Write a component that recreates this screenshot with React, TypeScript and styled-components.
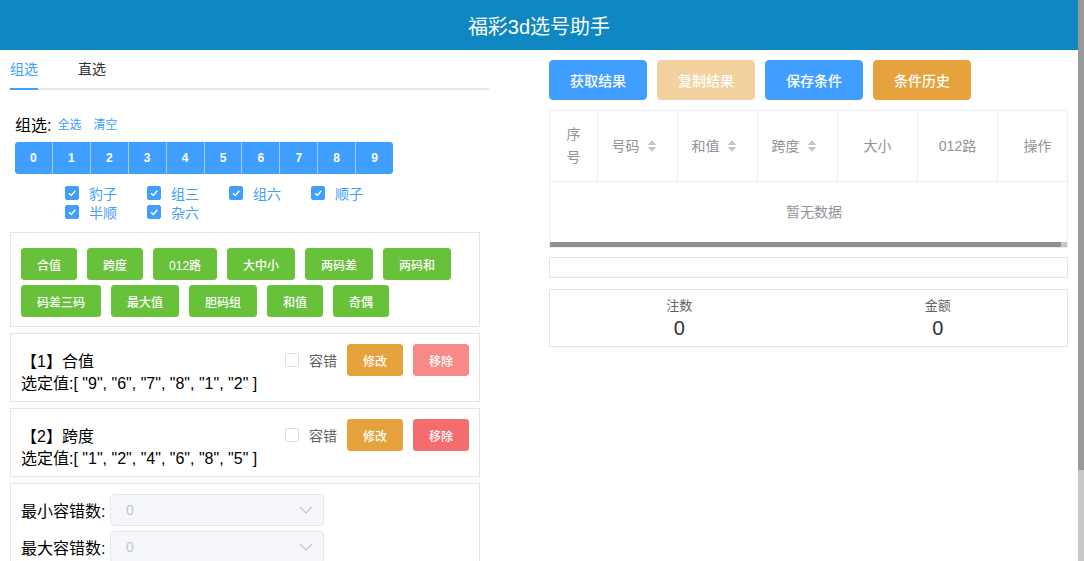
import styled, { createGlobalStyle } from 'styled-components';

const GlobalStyle = createGlobalStyle`
  * { box-sizing: border-box; }
  html, body { margin: 0; padding: 0; background: #fff; }
  body {
    font-family: "Liberation Sans", "Noto Sans CJK SC", sans-serif;
    color: #000;
  }
`

// the window: page content plus its vertical scrollbar
const Viewport = styled.div`
    height: 100vh;
    display: flex;
    overflow: hidden;
`

const Page = styled.div`
    flex: 1;
    min-width: 0;
    min-height: 669px;
`

const VTrack = styled.div`
    width: 6px;
    flex-shrink: 0;
    background: #c8c8c8;
`

const VThumb = styled.div`
    height: 470px;
    background: #999;
`

const Header = styled.header`
    height: 50px;
    background: #0f87c2;
    color: #fff;
    font-size: 20px;
    display: flex;
    align-items: center;
    justify-content: center;
`

const Main = styled.div`
    display: flex;
    gap: 60px;
    padding: 0 10px;
`

const LeftLayout = styled.div`
    width: 480px;
    display: flex;
    flex-direction: column;
`

const TabNav = styled.div`
    height: 40px;
    display: flex;
    gap: 40px;
    border-bottom: 2px solid #e4e7ed;
    margin-bottom: 15px;
`

const TabItem = styled.div<{ $active?: boolean }>`
    height: 40px;
    line-height: 38px;
    font-size: 14px;
    color: ${p => p.$active ? '#409eff' : '#303133'};
    border-bottom: 2px solid ${p => p.$active ? '#409eff' : 'transparent'};
`

const GroupPane = styled.div`
    padding-left: 5px;
`

const SelectRow = styled.div`
    height: 37px;
    display: flex;
    align-items: center;
    font-size: 16px;
`

const TextLink = styled.span`
    font-size: 12px;
    color: #409eff;
    margin-left: 6px;
    & + & { margin-left: 12px; }
`

const NumGroup = styled.div`
    width: 378px;
    height: 32px;
    display: flex;
    border-radius: 4px;
    overflow: hidden;
    background: #409eff;
`

const NumButton = styled.button`
    flex: 1;
    border: none;
    background: #409eff;
    color: #fff;
    font-family: inherit;
    font-size: 12px;
    font-weight: 700;
    padding: 0;
    & + & { border-left: 1px solid rgba(255, 255, 255, .5); }
`

const CheckGrid = styled.div`
    display: grid;
    grid-template-columns: repeat(4, 82px);
    margin: 9px 0 0 50px;
`

const CheckItem = styled.label<{ $checked?: boolean }>`
    height: 19px;
    display: flex;
    align-items: center;
    gap: 10px;
    font-size: 14px;
    color: ${p => p.$checked ? '#409eff' : '#606266'};
`

const CheckBox = styled.span<{ $checked?: boolean }>`
    width: 14px;
    height: 14px;
    border-radius: 2px;
    border: 1px solid ${p => p.$checked ? '#409eff' : '#dcdfe6'};
    background: ${p => p.$checked ? '#409eff' : '#fff'};
    display: flex;
    align-items: center;
    justify-content: center;
`

const Panel = styled.div`
    width: 470px;
    border: 1px solid #e4e4e4;
    margin-top: 6px;
`

const CondPanel = styled(Panel)`
    margin-top: 11px;
    padding: 15px 10px 9px;
    display: flex;
    flex-wrap: wrap;
    gap: 5px 10px;
`

const SmallButton = styled.button<{ $bg: string }>`
    height: 32px;
    padding: 0 15px;
    border: 1px solid ${p => p.$bg};
    background: ${p => p.$bg};
    color: #fff;
    border-radius: 3px;
    font-family: inherit;
    font-size: 12px;
    font-weight: 500;
`

const RuleCard = styled(Panel)`
    padding: 10px 10px 9px;
`

const RuleHead = styled.div`
    height: 32px;
    display: flex;
    align-items: center;
    justify-content: space-between;
`

const RuleTitle = styled.div`
    font-size: 16px;
`

const RuleTools = styled.div`
    display: flex;
    align-items: center;
    gap: 10px;
`

const ToolLabel = styled.span`
    font-size: 14px;
    color: #606266;
`

const RuleValue = styled.div`
    font-size: 16px;
    line-height: 16px;
`

const TolerancePanel = styled(Panel)`
    padding: 10px;
    display: flex;
    flex-direction: column;
    gap: 5px;
`

const FormRow = styled.div`
    display: flex;
    align-items: center;
`

const FormLabel = styled.span`
    font-size: 16px;
    width: 89px;
`

const SelectBox = styled.div`
    width: 214px;
    height: 32px;
    border: 1px solid #e4e7ed;
    border-radius: 4px;
    background: #f5f7fa;
    color: #c0c4cc;
    font-size: 14px;
    padding: 0 10px 0 15px;
    display: flex;
    align-items: center;
    justify-content: space-between;
`

const RightLayout = styled.div`
    width: 519px;
    display: flex;
    flex-direction: column;
`

const ActionRow = styled.div`
    margin-top: 10px;
    display: flex;
    gap: 10px;
`

const ActionButton = styled.button<{ $bg: string }>`
    height: 40px;
    width: 98px;
    border: 1px solid ${p => p.$bg};
    background: ${p => p.$bg};
    color: #fff;
    border-radius: 4px;
    font-family: inherit;
    font-size: 14px;
    font-weight: 500;
`

const TableWrap = styled.div`
    margin-top: 10px;
    border: 1px solid #ebeef5;
    overflow: hidden;
`

const TableGrid = styled.div`
    width: 528px;
    display: grid;
    grid-template-columns: 48px repeat(6, 80px);
`

const HeadCell = styled.div`
    padding: 12px 10px;
    line-height: 23px;
    font-size: 14px;
    color: #909399;
    border-right: 1px solid #ebeef5;
    border-bottom: 1px solid #ebeef5;
    display: flex;
    align-items: center;
    justify-content: center;
    text-align: center;
`

const CaretWrap = styled.span`
    width: 24px;
    padding-left: 7px;
    display: flex;
    align-items: center;
`

const EmptyRow = styled.div`
    grid-column: 1 / -1;
    height: 60px;
    line-height: 60px;
    text-align: center;
    font-size: 14px;
    color: #909399;
`

const HTrack = styled.div`
    height: 5px;
    background: #c8c8c8;
`

const HThumb = styled.div`
    height: 5px;
    background: #919191;
`

const BlankBox = styled.div`
    margin-top: 9px;
    height: 21px;
    border: 1px solid #e4e4e4;
`

const StatsBox = styled.div`
    margin-top: 11px;
    border: 1px solid #e4e4e4;
    padding: 8px 0;
    display: grid;
    grid-template-columns: 1fr 1fr;
`

const StatItem = styled.div`
    text-align: center;
`

const StatLabel = styled.div`
    font-size: 13px;
    line-height: 16px;
    color: #606266;
`

const StatValue = styled.div`
    margin-top: 4px;
    font-size: 20px;
    line-height: 20px;
    color: #303133;
`

const Check = () => (
    <svg width="10" height="10" viewBox="0 0 10 10">
        <polyline points="2,5.2 4.3,7.4 8.3,2.8" fill="none" stroke="#fff" strokeWidth="1.4" />
    </svg>
)

const SortCaret = () => (
    <svg width="10" height="12" viewBox="0 0 10 12">
        <path d="M5 0.5 L9.5 5 H0.5Z" fill="#c0c4cc" />
        <path d="M5 11.5 L9.5 7 H0.5Z" fill="#c0c4cc" />
    </svg>
)

const Chevron = () => (
    <svg width="14" height="8" viewBox="0 0 14 8">
        <polyline points="1,1 7,7 13,1" fill="none" stroke="#c0c4cc" strokeWidth="1.2" />
    </svg>
)

const types = ['豹子', '组三', '组六', '顺子', '半顺', '杂六'];
const conditions = ['合值', '跨度', '012路', '大中小', '两码差', '两码和', '码差三码', '最大值', '胆码组', '和值', '奇偶'];
const rules = [
    { name: '合值', values: ['9', '6', '7', '8', '1', '2'], removeColor: '#f78989' },
    { name: '跨度', values: ['1', '2', '4', '6', '8', '5'], removeColor: '#f56c6c' },
];
const columns = [
    { title: '序号', sort: false },
    { title: '号码', sort: true },
    { title: '和值', sort: true },
    { title: '跨度', sort: true },
    { title: '大小', sort: false },
    { title: '012路', sort: false },
    { title: '操作', sort: false },
];

// visible part of the table body vs its full width
const tableScroll = 510 / 516;

const App = () => {
    return (
        <Viewport>
            <GlobalStyle />
            <Page>
                <Header>福彩3d选号助手</Header>
                <Main>
                    <LeftLayout>
                        <TabNav>
                            <TabItem $active>组选</TabItem>
                            <TabItem>直选</TabItem>
                        </TabNav>
                        <GroupPane>
                            <SelectRow>
                                组选:
                                <TextLink>全选</TextLink>
                                <TextLink>清空</TextLink>
                            </SelectRow>
                            <NumGroup>
                                {Array.from({ length: 10 }, (_, i) => <NumButton key={i}>{i}</NumButton>)}
                            </NumGroup>
                            <CheckGrid>
                                {types.map(t => (
                                    <CheckItem key={t} $checked>
                                        <CheckBox $checked><Check /></CheckBox>
                                        {t}
                                    </CheckItem>
                                ))}
                            </CheckGrid>
                        </GroupPane>
                        <CondPanel>
                            {conditions.map(c => <SmallButton key={c} $bg="#67c23a">{c}</SmallButton>)}
                        </CondPanel>
                        {rules.map((r, index) => (
                            <RuleCard key={r.name}>
                                <RuleHead>
                                    <RuleTitle>【{index + 1}】{r.name}</RuleTitle>
                                    <RuleTools>
                                        <CheckBox />
                                        <ToolLabel>容错</ToolLabel>
                                        <SmallButton $bg="#e6a23c">修改</SmallButton>
                                        <SmallButton $bg={r.removeColor}>移除</SmallButton>
                                    </RuleTools>
                                </RuleHead>
                                <RuleValue>选定值:[ {r.values.map(v => `"${v}"`).join(', ')} ]</RuleValue>
                            </RuleCard>
                        ))}
                        <TolerancePanel>
                            <FormRow>
                                <FormLabel>最小容错数:</FormLabel>
                                <SelectBox>0<Chevron /></SelectBox>
                            </FormRow>
                            <FormRow>
                                <FormLabel>最大容错数:</FormLabel>
                                <SelectBox>0<Chevron /></SelectBox>
                            </FormRow>
                        </TolerancePanel>
                    </LeftLayout>
                    <RightLayout>
                        <ActionRow>
                            <ActionButton $bg="#409eff">获取结果</ActionButton>
                            <ActionButton $bg="#f3d19e">复制结果</ActionButton>
                            <ActionButton $bg="#409eff">保存条件</ActionButton>
                            <ActionButton $bg="#e6a23c">条件历史</ActionButton>
                        </ActionRow>
                        <TableWrap>
                            <TableGrid>
                                {columns.map(c => (
                                    <HeadCell key={c.title}>
                                        <span>{c.title}</span>
                                        {c.sort ? <CaretWrap><SortCaret /></CaretWrap> : <></>}
                                    </HeadCell>
                                ))}
                                <EmptyRow>暂无数据</EmptyRow>
                            </TableGrid>
                            <HTrack>
                                <HThumb style={{ width: `${tableScroll * 100}%` }} />
                            </HTrack>
                        </TableWrap>
                        <BlankBox />
                        <StatsBox>
                            <StatItem>
                                <StatLabel>注数</StatLabel>
                                <StatValue>0</StatValue>
                            </StatItem>
                            <StatItem>
                                <StatLabel>金额</StatLabel>
                                <StatValue>0</StatValue>
                            </StatItem>
                        </StatsBox>
                    </RightLayout>
                </Main>
            </Page>
            <VTrack>
                <VThumb />
            </VTrack>
        </Viewport>
    )
}

export default App
